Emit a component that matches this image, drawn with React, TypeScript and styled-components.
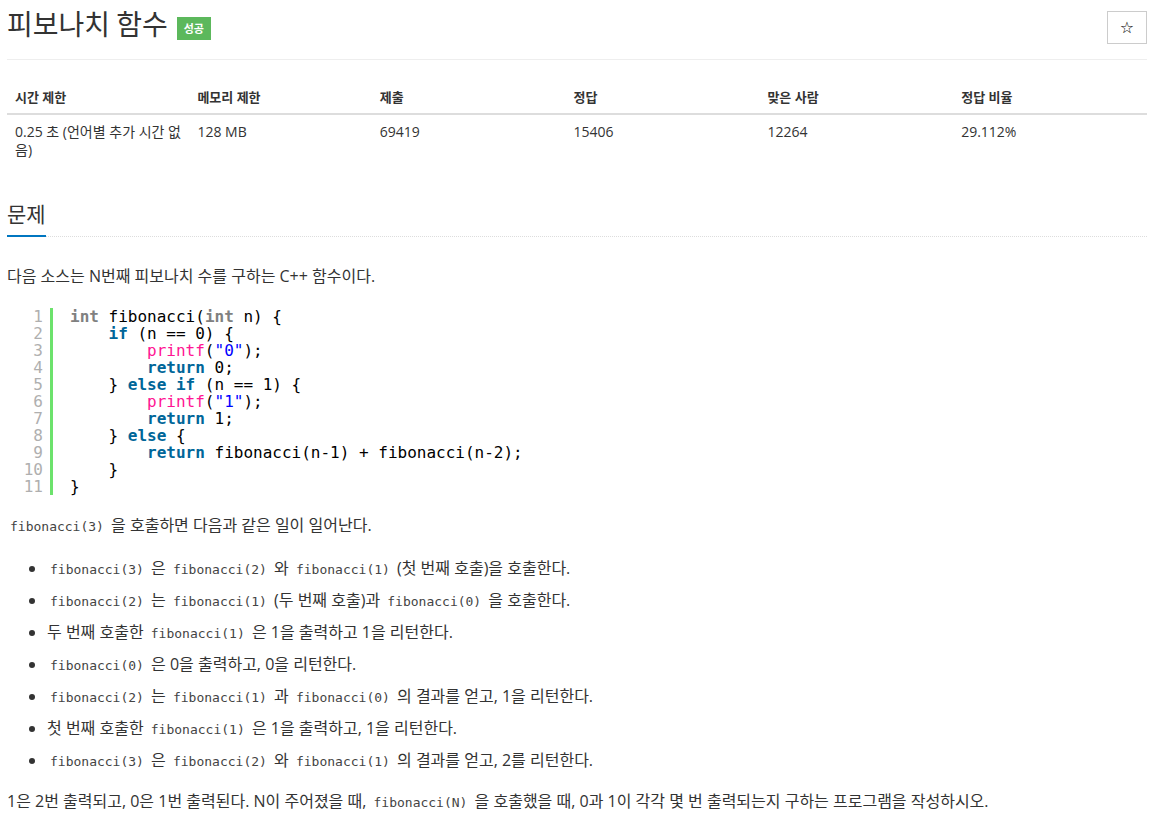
import React from 'react'
import styled, { createGlobalStyle } from 'styled-components'

const GlobalStyle = createGlobalStyle`
    body {
        margin: 0;
        background: #fff;
        color: #333;
        font-family: "Open Sans", "Noto Sans CJK KR", sans-serif;
    }
`

const Page = styled.div`
    width: 1140px;
    margin-left: 7px;
`

const TitleRow = styled.div`
    display: flex;
    align-items: center;
    justify-content: space-between;
    height: 44px;
    padding-bottom: 15px;
    border-bottom: 1px solid #eee;
`

const TitleWrap = styled.div`
    display: flex;
    align-items: center;
    gap: 9px;
    padding-top: 2px;
`

const Title = styled.span`
    font-size: 28px;
    color: #333;
    font-family: "Noto Sans CJK KR", sans-serif;
`

const Badge = styled.span`
    display: inline-flex;
    align-items: center;
    justify-content: center;
    width: 34px;
    height: 23px;
    margin-top: 10px;
    background: #5cb85c;
    color: #fff;
    font-size: 11px;
    font-weight: 700;
    font-family: "Noto Sans CJK KR", sans-serif;
`

const StarButton = styled.button`
    width: 40px;
    height: 33px;
    margin-top: 10px;
    border: 1px solid #ccc;
    background: #fff;
    color: #000;
    font-size: 16px;
    padding: 0;
    font-family: "DejaVu Sans", sans-serif;
`

const InfoTable = styled.table`
    width: 100%;
    border-collapse: collapse;
    margin-top: 20px;
`

const Th = styled.th<{ $w: string }>`
    width: ${({ $w }) => $w};
    text-align: left;
    font-size: 13px;
    font-weight: 700;
    line-height: 18px;
    padding: 8px 8px 7px;
    border-bottom: 2px solid #ddd;
    vertical-align: bottom;
`

const Td = styled.td`
    font-size: 14px;
    padding: 8px;
    line-height: 18px;
    vertical-align: top;
`

const SectionHead = styled.div`
    margin-top: 31px;
    border-bottom: 1px dotted #ddd;
`

const SectionTitle = styled.h2`
    display: inline-block;
    margin: 0 0 -1px;
    padding-bottom: 7px;
    font-size: 21px;
    font-weight: 400;
    line-height: 30px;
    border-bottom: 2px solid #0076c0;
    font-family: "Noto Sans CJK KR", sans-serif;
`

const Para = styled.p`
    margin: 0;
    font-size: 16px;
    line-height: 24px;
`

const FirstPara = styled(Para)`
    margin-top: 27px;
`

const CodeBlock = styled.div`
    display: flex;
    margin: 20px 0 0 17px;
    font-family: "DejaVu Sans Mono", monospace;
    font-size: 16px;
    line-height: 17px;
`

const Gutter = styled.div`
    display: flex;
    flex-direction: column;
    align-items: flex-end;
    width: 19px;
    padding-right: 7px;
    border-right: 3px solid #6ce26c;
    color: #afafaf;
`

const Lines = styled.div`
    display: flex;
    flex-direction: column;
    padding-left: 17px;
    color: #000;
    white-space: pre;
`

const Tok = styled.span<{ $kind: 'kw' | 'type' | 'fn' | 'str' }>`
    color: ${({ $kind }) =>
        $kind === 'kw' ? '#006699' : $kind === 'type' ? '#808080' : $kind === 'fn' ? '#ff1493' : '#0000ff'};
    font-weight: ${({ $kind }) => ($kind === 'kw' || $kind === 'type' ? 700 : 400)};
`

const Code = styled.code`
    font-family: "DejaVu Sans Mono", monospace;
    font-size: 13px;
    line-height: 1;
    color: #444;
    padding: 0 3px;
`

const AfterCode = styled(Para)`
    margin-top: 18px;
`

const List = styled.ul`
    margin: 19px 0 0;
    padding-left: 40px;
`

const Item = styled.li`
    font-size: 16px;
    line-height: 24px;
    margin-bottom: 8px;
`

const LastPara = styled(Para)`
    margin-top: 17px;
`

const K = ({ children }: { children: string }) => <Tok $kind="kw">{children}</Tok>
const T = ({ children }: { children: string }) => <Tok $kind="type">{children}</Tok>
const F = ({ children }: { children: string }) => <Tok $kind="fn">{children}</Tok>
const S = ({ children }: { children: string }) => <Tok $kind="str">{children}</Tok>

const codeLines: React.ReactNode[] = [
    <><T>int</T> fibonacci(<T>int</T> n) {'{'}</>,
    <>{'    '}<K>if</K> (n == 0) {'{'}</>,
    <>{'        '}<F>printf</F>(<S>"0"</S>);</>,
    <>{'        '}<K>return</K> 0;</>,
    <>{'    } '}<K>else</K> <K>if</K> (n == 1) {'{'}</>,
    <>{'        '}<F>printf</F>(<S>"1"</S>);</>,
    <>{'        '}<K>return</K> 1;</>,
    <>{'    } '}<K>else</K> {'{'}</>,
    <>{'        '}<K>return</K> fibonacci(n-1) + fibonacci(n-2);</>,
    <>{'    }'}</>,
    <>{'}'}</>,
]

const headers = ['시간 제한', '메모리 제한', '제출', '정답', '맞은 사람', '정답 비율']
const widths = ['16%', '16%', '17%', '17%', '17%', '17%']
const values = ['0.25 초 (언어별 추가 시간 없음)', '128 MB', '69419', '15406', '12264', '29.112%']

export default function App() {
    return (
        <Page>
            <GlobalStyle />
            <TitleRow>
                <TitleWrap>
                    <Title>피보나치 함수</Title>
                    <Badge>성공</Badge>
                </TitleWrap>
                <StarButton>☆</StarButton>
            </TitleRow>

            <InfoTable>
                <thead>
                    <tr>
                        {headers.map((h, i) => (
                            <Th key={h} $w={widths[i]}>{h}</Th>
                        ))}
                    </tr>
                </thead>
                <tbody>
                    <tr>
                        {values.map(v => (
                            <Td key={v}>{v}</Td>
                        ))}
                    </tr>
                </tbody>
            </InfoTable>

            <SectionHead>
                <SectionTitle>문제</SectionTitle>
            </SectionHead>

            <FirstPara>다음 소스는 N번째 피보나치 수를 구하는 C++ 함수이다.</FirstPara>

            <CodeBlock>
                <Gutter>
                    {codeLines.map((_, i) => (
                        <span key={i}>{i + 1}</span>
                    ))}
                </Gutter>
                <Lines>
                    {codeLines.map((l, i) => (
                        <span key={i}>{l}</span>
                    ))}
                </Lines>
            </CodeBlock>

            <AfterCode><Code>fibonacci(3)</Code> 을 호출하면 다음과 같은 일이 일어난다.</AfterCode>

            <List>
                <Item><Code>fibonacci(3)</Code> 은 <Code>fibonacci(2)</Code> 와 <Code>fibonacci(1)</Code> (첫 번째 호출)을 호출한다.</Item>
                <Item><Code>fibonacci(2)</Code> 는 <Code>fibonacci(1)</Code> (두 번째 호출)과 <Code>fibonacci(0)</Code> 을 호출한다.</Item>
                <Item>두 번째 호출한 <Code>fibonacci(1)</Code> 은 1을 출력하고 1을 리턴한다.</Item>
                <Item><Code>fibonacci(0)</Code> 은 0을 출력하고, 0을 리턴한다.</Item>
                <Item><Code>fibonacci(2)</Code> 는 <Code>fibonacci(1)</Code> 과 <Code>fibonacci(0)</Code> 의 결과를 얻고, 1을 리턴한다.</Item>
                <Item>첫 번째 호출한 <Code>fibonacci(1)</Code> 은 1을 출력하고, 1을 리턴한다.</Item>
                <Item><Code>fibonacci(3)</Code> 은 <Code>fibonacci(2)</Code> 와 <Code>fibonacci(1)</Code> 의 결과를 얻고, 2를 리턴한다.</Item>
            </List>

            <LastPara>1은 2번 출력되고, 0은 1번 출력된다. N이 주어졌을 때, <Code>fibonacci(N)</Code> 을 호출했을 때, 0과 1이 각각 몇 번 출력되는지 구하는 프로그램을 작성하시오.</LastPara>
        </Page>
    )
}
